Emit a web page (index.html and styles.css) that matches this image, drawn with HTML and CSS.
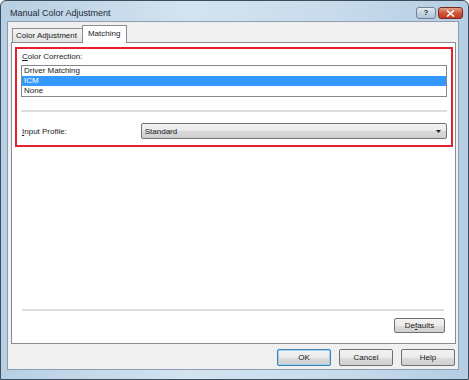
FILE: index.html
```html
<!DOCTYPE html>
<html lang="en">
<head>
    <meta charset="UTF-8">
    <title>Manual Color Adjustment</title>
    <link rel="stylesheet" href="styles.css">
</head>
<body>
    <div class="window">
        <div class="titlebar">
            <span class="title">Manual Color Adjustment</span>
            <div class="caption-buttons">
                <span class="cap-btn cap-help">?</span>
                <span class="cap-btn cap-close">
                    <svg width="9" height="7" viewBox="0 0 9 7"><path d="M1 0.5 L8 6.5 M8 0.5 L1 6.5" stroke="#fff" stroke-width="1.6"/></svg>
                </span>
            </div>
        </div>
        <div class="client">
            <div class="tabs">
                <div class="tab">Color Adjustment</div>
                <div class="tab active">Matching</div>
            </div>
            <div class="panel">
                <div class="highlight">
                    <div class="label"><u>C</u>olor Correction:</div>
                    <ul class="listbox">
                        <li>Driver Matching</li>
                        <li class="selected">ICM</li>
                        <li>None</li>
                    </ul>
                    <div class="separator"></div>
                    <div class="row">
                        <span class="row-label"><u>I</u>nput Profile:</span>
                        <div class="combo">
                            <span>Standard</span>
                            <svg width="5" height="3" viewBox="0 0 5 3"><path d="M0 0 H5 L2.5 3 Z" fill="#222"/></svg>
                        </div>
                    </div>
                </div>
                <div class="spacer"></div>
                <div class="separator bottom-sep"></div>
                <div class="defaults-row">
                    <button class="btn small">De<u>f</u>aults</button>
                </div>
            </div>
            <div class="dialog-buttons">
                <button class="btn default">OK</button>
                <button class="btn">Cancel</button>
                <button class="btn">Help</button>
            </div>
        </div>
    </div>
</body>
</html>
```

FILE: styles.css
```css
body {
    margin: 0;
    font-family: "Liberation Sans", Arial, sans-serif;
    font-size: 8px;
    color: #1a1a1a;
}

.window {
    width: 469px;
    height: 380px;
    box-sizing: border-box;
    border: 1px solid #3b4c5a;
    border-radius: 6px 6px 0 0;
    background: linear-gradient(to right, #b7cfe3, #d3e3f0 40%, #c9dcec 70%, #b5cde2);
    display: flex;
    flex-direction: column;
}

.titlebar {
    height: 20px;
    display: flex;
    align-items: flex-start;
    justify-content: space-between;
    padding-left: 9px;
}

.title {
    font-size: 9px;
    margin-top: 7px;
    color: #1e2a36;
}

.caption-buttons {
    display: flex;
    gap: 2px;
    margin-top: 6px;
    margin-right: 5px;
}

.cap-btn {
    height: 10px;
    border: 1px solid #6f8296;
    border-radius: 3px;
    display: flex;
    align-items: center;
    justify-content: center;
    font-size: 8px;
    font-weight: bold;
    color: #333;
}

.cap-help {
    width: 18px;
    background: linear-gradient(#e4edf5, #c4d3e1 50%, #b2c4d6);
    line-height: 10px;
}

.cap-close {
    width: 23px;
    border-color: #7a2a1c;
    background: linear-gradient(#e5a08c, #d2563b 50%, #c43a20);
}

.client {
    flex: 1;
    margin: 0 9px 9px 6px;
    background-color: #f0f0f0;
    border: 1px solid #8a9fb3;
    padding: 4px 2px 0 3px;
    display: flex;
    flex-direction: column;
}

.tabs {
    height: 16px;
    display: flex;
    align-items: flex-end;
    padding-left: 1px;
    position: relative;
    z-index: 1;
}

.tab {
    height: 13px;
    line-height: 13px;
    padding: 0 5px 0 3px;
    border: 1px solid #898c95;
    border-bottom: none;
    background: linear-gradient(#f4f4f4, #e3e3e3);
    margin-bottom: 0;
}

.tab.active {
    height: 17px;
    line-height: 15px;
    margin-bottom: -1px;
    margin-left: -1px;
    background: #fff;
    padding: 0 6px 0 5px;
}

.panel {
    height: 300px;
    border: 1px solid #898c95;
    background: #fff;
    display: flex;
    flex-direction: column;
}

.highlight {
    margin: 4px 2px 0 3px;
    border: 2px solid #e2222e;
    padding: 3px 4px 6px 4px;
    display: flex;
    flex-direction: column;
}

.label {
    height: 10px;
    line-height: 10px;
    padding-left: 1px;
    margin-bottom: 3px;
}

.listbox {
    list-style: none;
    margin: 0;
    padding: 0;
    border: 1px solid #828790;
    height: 30px;
}

.listbox li {
    height: 10px;
    line-height: 10px;
    padding-left: 2px;
}

.listbox li.selected {
    background-color: #3399ff;
    color: #fff;
}

.separator {
    height: 2px;
    background-color: #dcdcdc;
    margin-top: 13px;
}

.row {
    display: flex;
    align-items: center;
    margin-top: 11px;
}

.row-label {
    width: 121px;
    padding-left: 1px;
}

.combo {
    width: 302px;
    height: 14px;
    border: 1px solid #707070;
    border-radius: 2px;
    background: linear-gradient(#f3f3f3, #e9e9e9 50%, #d9d9d9 51%, #cfcfcf);
    display: flex;
    align-items: center;
    justify-content: space-between;
    padding: 0 5px 0 3px;
    box-sizing: content-box;
}

.spacer {
    flex: 1;
}

.bottom-sep {
    margin: 0 11px 7px 10px;
}

.defaults-row {
    display: flex;
    justify-content: flex-end;
    padding: 0 10px 10px 0;
}

.btn {
    font-family: "Liberation Sans", Arial, sans-serif;
    font-size: 8px;
    width: 54px;
    height: 17px;
    padding: 0;
    border: 1px solid #707070;
    border-radius: 2px;
    background: linear-gradient(#f2f2f2, #ebebeb 50%, #dddddd 51%, #cfcfcf);
    color: #1a1a1a;
}

.btn.small {
    width: 51px;
    height: 15px;
}

.btn.default {
    border-color: #3c7fb1;
    box-shadow: inset 0 0 0 1px #9fd3f2;
}

.dialog-buttons {
    display: flex;
    justify-content: flex-end;
    gap: 8px;
    margin-top: 5px;
    padding-right: 1px;
}
```
